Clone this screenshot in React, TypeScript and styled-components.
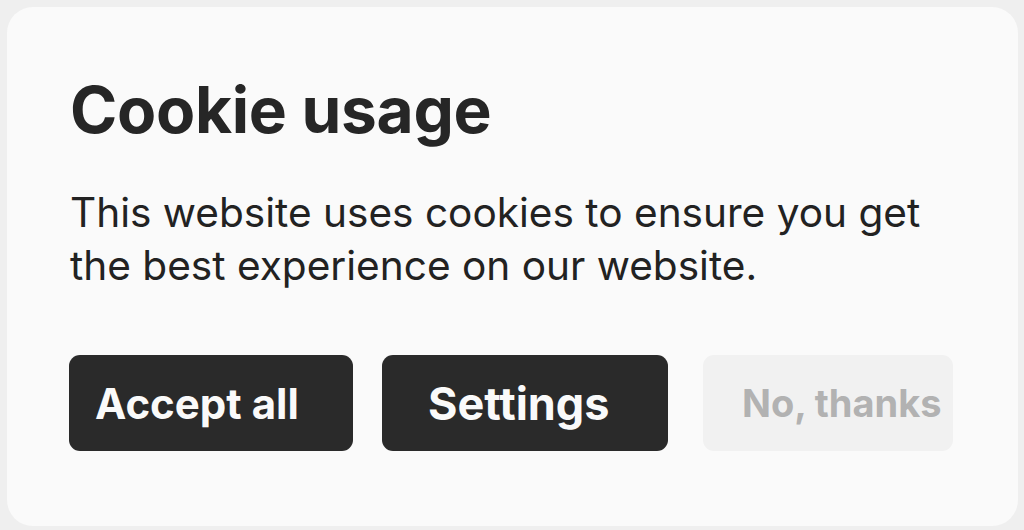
import React from "react";
import styled, {createGlobalStyle} from "styled-components";

const GlobalStyle = createGlobalStyle`
  html, body {
    margin: 0;
    padding: 0;
    background: #efefef;
    font-family: Inter, "Noto Sans", sans-serif;
  }
`;

const Page = styled.div`
  width: 1024px;
  height: 530px;
  padding: 7px 6px 4px 7px;
  box-sizing: border-box;
  display: flex;
`;

const Card = styled.div`
  flex: 1;
  background: #fafafa;
  border-radius: 26px;
  padding: 65px 63px 0 62px;
  box-sizing: border-box;
  color: #262626;
`;

const Title = styled.h1`
  margin: 0 0 0 1px;
  font-size: 64px;
  font-weight: 700;
  letter-spacing: -0.3px;
  line-height: 76px;
`;

const Text = styled.p`
  margin: 38px 0 0 1px;
  font-size: 40.6px;
  font-weight: 400;
  line-height: 53px;
  color: #222;
`;

const Actions = styled.div`
  display: flex;
  margin-top: 63px;
`;

const Button = styled.button<{$w: number; $gap: number; $pad: number; $size: number; $muted?: boolean}>`
  width: ${p => p.$w}px;
  height: 96px;
  margin-right: ${p => p.$gap}px;
  padding: 0 0 0 ${p => p.$pad}px;
  border: none;
  border-radius: 11px;
  font-family: inherit;
  font-size: ${p => p.$size}px;
  font-weight: 700;
  display: flex;
  align-items: center;
  justify-content: flex-start;
  white-space: nowrap;
  background: ${p => (p.$muted ? "#f1f1f1" : "#2a2a2a")};
  color: ${p => (p.$muted ? "#b2b2b2" : "#fafafa")};
  cursor: pointer;
`;

export default function App() {
  return (
    <>
      <GlobalStyle/>
      <Page>
        <Card>
          <Title>Cookie usage</Title>
          <Text>
            This website uses cookies to ensure you get<br/>
            the best experience on our website.
          </Text>
          <Actions>
            <Button $w={284} $gap={29} $pad={26} $size={42}>Accept all</Button>
            <Button $w={286} $gap={35} $pad={46} $size={45}>Settings</Button>
            <Button $w={250} $gap={0} $pad={39} $size={38} $muted>No, thanks</Button>
          </Actions>
        </Card>
      </Page>
    </>
  );
}
